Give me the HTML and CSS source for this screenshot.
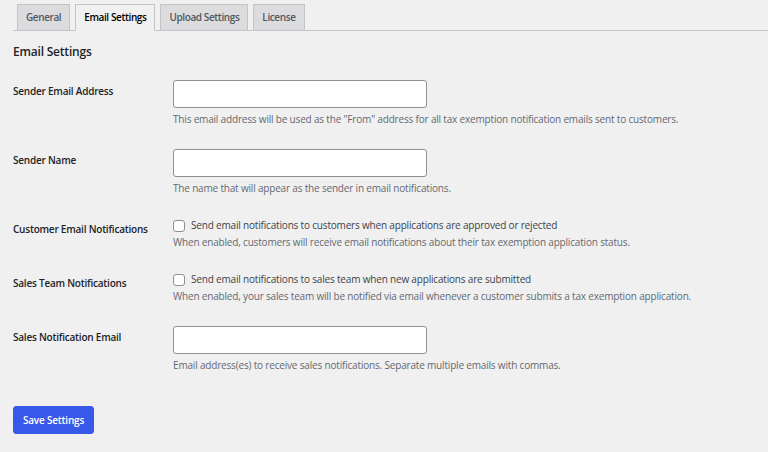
FILE: index.html
```html
<!DOCTYPE html>
<html lang="en">
<head>
<meta charset="utf-8">
<title>Email Settings</title>
<link rel="stylesheet" href="styles.css">
</head>
<body>
<div class="wrap">
  <nav class="tabs">
    <a class="tab" href="#">General</a>
    <a class="tab active" href="#">Email Settings</a>
    <a class="tab" href="#">Upload Settings</a>
    <a class="tab" href="#">License</a>
  </nav>
  <h2 class="title">Email Settings</h2>
  <form class="form">
    <div class="row">
      <div class="label">Sender Email Address</div>
      <div class="field">
        <input class="text" type="email">
        <p class="desc">This email address will be used as the "From" address for all tax exemption notification emails sent to customers.</p>
      </div>
    </div>
    <div class="row">
      <div class="label">Sender Name</div>
      <div class="field">
        <input class="text" type="text">
        <p class="desc">The name that will appear as the sender in email notifications.</p>
      </div>
    </div>
    <div class="row">
      <div class="label">Customer Email Notifications</div>
      <div class="field">
        <label class="check"><input type="checkbox" class="box"><span>Send email notifications to customers when applications are approved or rejected</span></label>
        <p class="desc">When enabled, customers will receive email notifications about their tax exemption application status.</p>
      </div>
    </div>
    <div class="row">
      <div class="label">Sales Team Notifications</div>
      <div class="field">
        <label class="check"><input type="checkbox" class="box"><span>Send email notifications to sales team when new applications are submitted</span></label>
        <p class="desc">When enabled, your sales team will be notified via email whenever a customer submits a tax exemption application.</p>
      </div>
    </div>
    <div class="row">
      <div class="label">Sales Notification Email</div>
      <div class="field">
        <input class="text" type="text">
        <p class="desc">Email address(es) to receive sales notifications. Separate multiple emails with commas.</p>
      </div>
    </div>
    <div class="actions">
      <button type="button" class="button">Save Settings</button>
    </div>
  </form>
</div>
</body>
</html>
```

FILE: styles.css
```css
* { box-sizing: border-box; }
html, body { margin: 0; padding: 0; }
body {
  background: #f0f0f1;
  color: #1d2327;
  font-family: "Open Sans", "Noto Sans", sans-serif;
  font-size: 10px;
  letter-spacing: -0.18px;
}
.wrap { padding: 4px 0 0 13px; }
.tabs {
  display: flex;
  gap: 5px;
  padding-left: 4px;
  border-bottom: 1px solid #c3c4c7;
}
.tab {
  display: block;
  padding: 4px 8px;
  line-height: 17px;
  font-size: 10px;
  letter-spacing: -0.4px;
  font-weight: 600;
  color: #50575e;
  text-decoration: none;
  background: #dcdcde;
  border: 1px solid #c3c4c7;
  margin-bottom: -1px;
}
.tab.active {
  background: #f0f0f1;
  color: #000;
  border-bottom-color: #f0f0f1;
}
.title {
  margin: 12px 0 9px;
  font-size: 12px;
  letter-spacing: -0.2px;
  line-height: 17px;
  font-weight: 600;
  color: #1d2327;
}
.row {
  display: grid;
  grid-template-columns: 160px 1fr;
  padding: 11px 0 12px;
}
.label {
  padding-top: 4px;
  line-height: 14px;
  font-weight: 600;
  letter-spacing: -0.22px;
  color: #1d2327;
}
.field { display: flex; flex-direction: column; align-items: flex-start; }
.text {
  display: block;
  width: 254px;
  height: 28px;
  margin: 0;
  background: #fff;
  border: 1px solid #8c8f94;
  border-radius: 3px;
}
.desc {
  margin: 4px 0 0;
  line-height: 14px;
  color: #646970;
}
.check {
  display: flex;
  align-items: center;
  line-height: 15px;
  color: #3c434a;
}
.box {
  appearance: none;
  -webkit-appearance: none;
  width: 12px;
  height: 12px;
  margin: 0 6px 0 0;
  background: #fff;
  border: 1px solid #8c8f94;
  border-radius: 3px;
}
.check + .desc { margin-top: 2px; }
.actions { padding-top: 22px; }
.button {
  display: block;
  width: 81px;
  height: 28px;
  padding: 0;
  background: #3858e9;
  color: #fff;
  border: 1px solid #3858e9;
  border-radius: 3px;
  font-family: inherit;
  font-size: 10px;
  letter-spacing: -0.2px;
  font-weight: 600;
}
```
